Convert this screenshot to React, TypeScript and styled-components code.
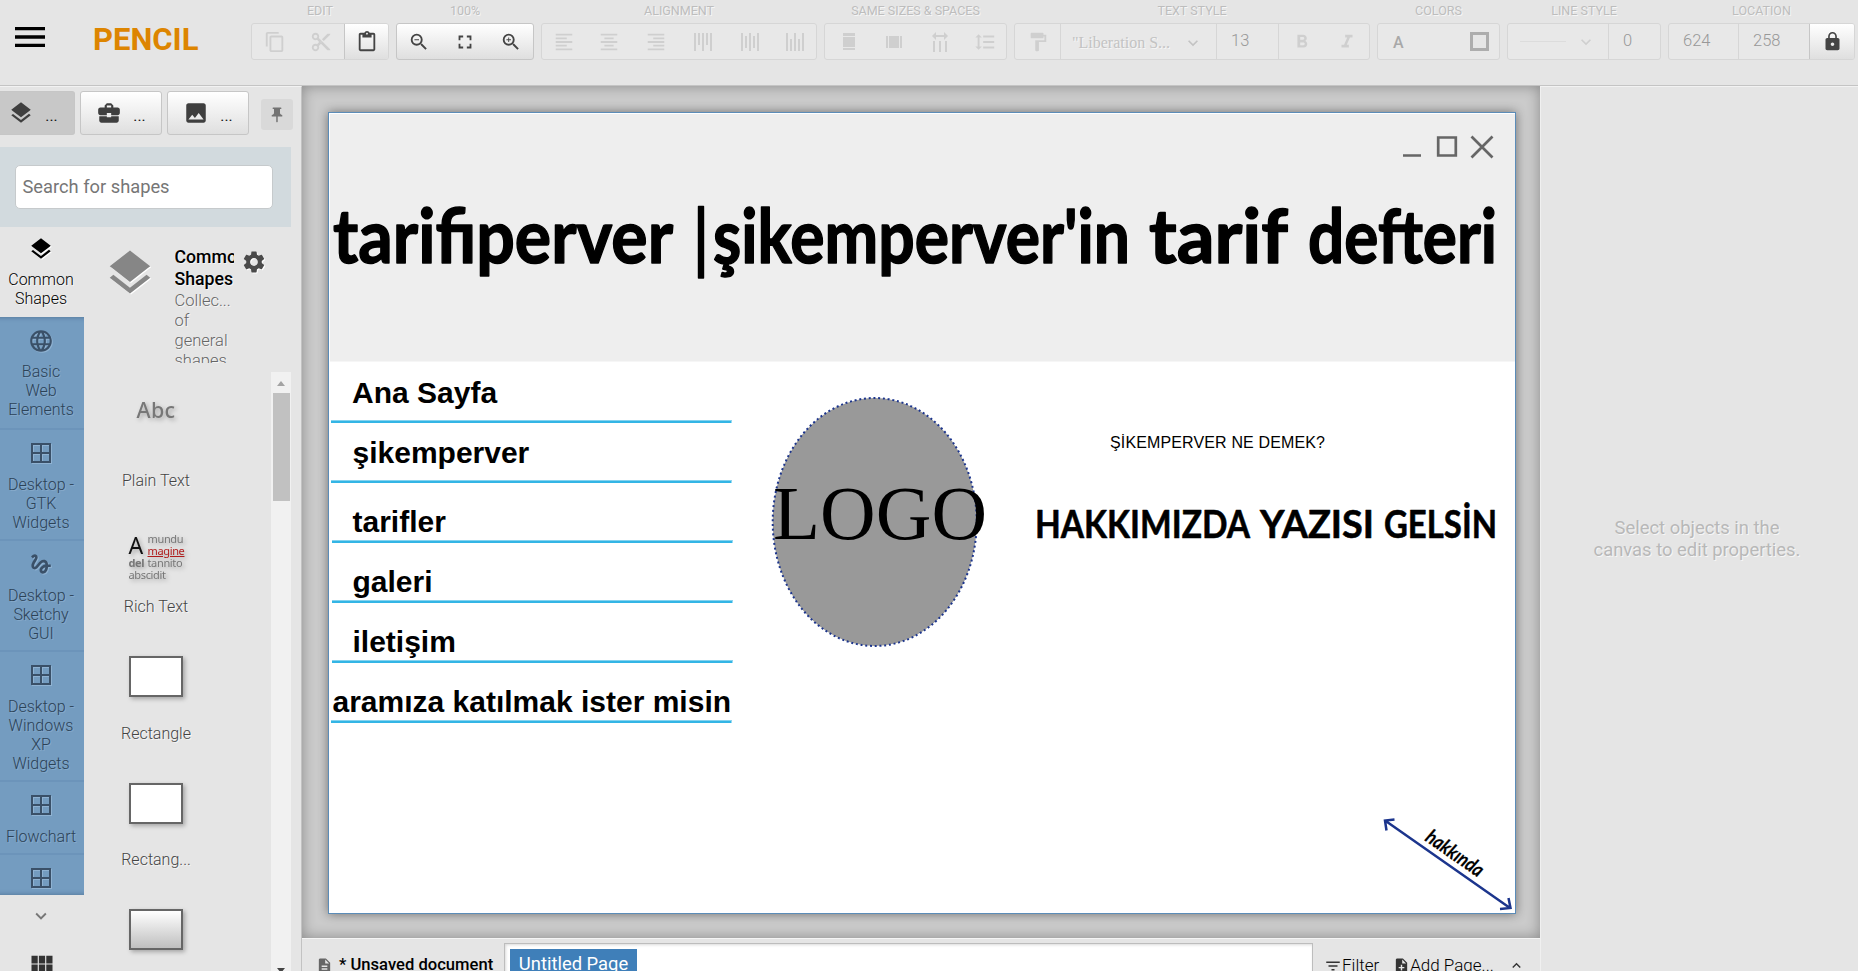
import React from 'react';
import styled, { createGlobalStyle, css } from 'styled-components';
import {
  MdMenu, MdContentCopy, MdContentCut, MdContentPaste, MdZoomOut, MdZoomIn, MdFullscreen,
  MdFormatAlignLeft, MdFormatAlignCenter, MdFormatAlignRight, MdFormatLineSpacing, MdFormatPaint,
  MdFormatBold, MdFormatItalic, MdExpandMore, MdExpandLess, MdLock, MdLayers, MdBusinessCenter, MdPhoto,
  MdPushPin, MdSettings, MdLanguage, MdGesture, MdViewModule, MdDescription, MdFilterList, MdNoteAdd,
} from 'react-icons/md';

const Global = createGlobalStyle`
  * { box-sizing: border-box; }
  html, body { margin: 0; height: 100%; overflow: hidden; }
  body { font-family: Roboto, sans-serif; font-size: 16px; color: #000; background: #e5e5e5; }
`;

const emboss = css`text-shadow: 1px 1px 0 #f6f6f6;`;

const Shell = styled.div`
  width: 1858px; height: 971px; overflow: hidden;
  display: flex; flex-direction: column; background: #e5e5e5;
`;

/* top bar */
const Header = styled.header`
  display: flex; flex: none; height: 86px; border-bottom: 1px solid #c4c4c4;
`;
const MenuButton = styled.div`
  width: 93px; padding: 16.5px 0 0 10px; svg { display: block; }
`;
const Brand = styled.div`
  width: 158px; padding-top: 21.5px; font-size: 31px; line-height: 35px; font-weight: 700; color: #dd8500;
`;
const Groups = styled.div`display: flex; gap: 7px;`;
const Group = styled.section<{ $w: number }>`width: ${p => p.$w}px;`;
const GroupTitle = styled.div`
  height: 23px; padding-top: 3px; font-size: 12.5px; line-height: 16px; text-align: center; color: #bdbdbd;
  white-space: nowrap; ${emboss}
`;
const GroupBox = styled.div<{ $live?: boolean }>`
  height: 37px; display: flex; border: 1px solid ${p => (p.$live ? '#c6c6c6' : '#d6d6d6')}; border-radius: 3px;
  background: ${p => (p.$live ? 'linear-gradient(#fff, #dfdfdf)' : '#e8e8e8')};
  color: ${p => (p.$live ? '#444' : '#cfcfcf')};
  overflow: hidden;
`;
const Cell = styled.div<{ $w?: number; $line?: boolean; $live?: boolean }>`
  ${p => (p.$w ? `flex: none; width: ${p.$w}px;` : 'flex: 1;')}
  display: flex; align-items: center; justify-content: center;
  ${p => p.$line && 'border-left: 1px solid #d6d6d6;'}
  ${p => p.$live && 'background: linear-gradient(#fff, #dfdfdf); color: #444; border-left: 1px solid #c6c6c6;'}
`;
const NumberCell = styled(Cell)`
  justify-content: flex-start; padding: 0 0 2px 14px; font-size: 16.5px; font-weight: 300; color: #989898;
`;
const FontCell = styled(Cell)`
  justify-content: space-between; padding: 2px 13px 0 11px;
  font-family: "Liberation Serif", serif; color: #c3c3c3; ${emboss}
`;
const LinePreview = styled.div`width: 46px; height: 1px; background: #dcdcdc; margin-right: 10px;`;
const ColorA = styled.div`flex: 1; padding: 9px 0 0 15px; font-weight: 500; color: #a8a8a8;`;
const ColorSquare = styled.div`width: 19px; height: 19px; margin: 8px 10px 0 0; border: 3px solid #adadad; background: #e6e6e6;`;

/* body */
const Body = styled.div`flex: 1; min-height: 0; display: flex;`;
const Sidebar = styled.aside`
  width: 302px; flex: none; display: flex; flex-direction: column; border-top: 1px solid #f2f2f2; border-right: 1px solid #c2c2c2;
`;
const Tabs = styled.div`display: flex; height: 60px; padding-top: 4px; flex: none;`;
const Tab = styled.div<{ $on?: boolean; $w: number }>`
  width: ${p => p.$w}px; height: 44px; margin-right: 5px; border: 1px solid #c6c6c6; border-radius: 3px;
  display: flex; align-items: center; justify-content: center; gap: 11px; color: #3f3f3f;
  background: linear-gradient(#fff, #dfdfdf);
  ${p => p.$on && 'background: #c8c8c8; border-left: 0; border-radius: 0 3px 3px 0; padding-right: 8px;'}
`;
const Dots = styled.span`color: #111; line-height: 20px; padding-top: 5px; font-size: 15.5px;`;
const Pin = styled.div`
  width: 32px; height: 31px; margin: 8px 0 0 7px; border-radius: 3px; background: #d9d9d9; color: #737373;
  display: flex; align-items: center; justify-content: center;
`;
const SearchArea = styled.div`flex: none; width: 291px; height: 80px; background: #d2dade; padding: 18px 18px 0 15px;`;
const SearchInput = styled.div`
  height: 44px; border: 1px solid #c6cacc; border-radius: 5px; background: #fff; padding: 0 6.5px;
  font-size: 18.3px; line-height: 41px; color: #767676;
`;
const Library = styled.div`flex: 1; min-height: 0; display: flex;`;
const NavColumn = styled.nav`width: 84px; display: flex; flex-direction: column; align-items: center;`;
const NavList = styled.div`
  position: relative; width: 84px; height: 668px; flex: none; overflow: hidden; background: #749cc0;
`;
const NavItem = styled.div<{ $on?: boolean; $h: number }>`
  height: ${p => p.$h}px; padding: ${p => (p.$on ? 9 : 10.5)}px 2px 0 0; text-align: center; line-height: 19px; font-weight: 300;
  border-bottom: 2px solid #6c94ba; color: #2c4257; ${p => !p.$on && 'text-shadow: 1px 1px 0 #86aacb;'}
  svg { display: block; margin: 0 auto 8.5px; color: #3a5068; filter: drop-shadow(1px 1px 0 #8fb2d2); }
  ${p => p.$on && css`
    background: #e5e5e5; color: #000; border: 0; ${emboss}
    svg { color: #000; filter: drop-shadow(1px 1px 0 #fff); margin-bottom: 8px; }
  `}
`;
const NavShade = styled.div`
  position: absolute; left: -8px; right: -8px; top: 90px; bottom: 0; box-shadow: inset 0 0 5px rgba(40, 70, 100, .5);
`;
const NavMore = styled.div`padding: 10px 2px 0 0; height: 55px; flex: none; color: #777;`;
const NavGrid = styled.div`flex: none; height: 28px; padding-right: 1px; color: #333;`;
const Collection = styled.div`width: 207px; display: flex; flex-direction: column;`;
const CollectionHead = styled.div`display: flex; height: 136px; overflow: hidden; padding-top: 19px; flex: none;`;
const BigIcon = styled.div`width: 90.5px; padding: 0 0 0 19px; color: #868686; svg { display: block; filter: drop-shadow(1px 1px 0 #fff); }`;
const HeadText = styled.div`width: 59.5px; overflow: hidden; font-size: 16.5px; line-height: 20px; font-weight: 300; color: #666; ${emboss}`;
const HeadTitle = styled.div`font-size: 17.7px; line-height: 22px; font-weight: 500; color: #000; padding-bottom: 1px;`;
const Gear = styled.div`padding: 3px 0 0 7px; color: #4a4a4a; svg { filter: drop-shadow(1px 1px 0 #fff); }`;
const ShapeArea = styled.div`display: flex; justify-content: space-between; height: 599px; margin-top: 9px; overflow: hidden;`;
const ShapeList = styled.div`width: 144px;`;
const Shape = styled.div`height: 126.600px; padding-top: 12px;`;
const Thumb = styled.div`height: 79px; display: flex; align-items: center; justify-content: center; filter: drop-shadow(2px 2px 2px rgba(0,0,0,.28));`;
const ShapeName = styled.div`margin-top: 7.5px; line-height: 20px; text-align: center; font-weight: 300; color: #444; ${emboss}`;
const RectThumb = styled.div<{ $shade?: boolean }>`
  width: 54px; height: 41px; border: 2px solid #666;
  background: ${p => (p.$shade ? 'linear-gradient(#fff, #bfbfbf)' : '#fff')};
`;
const AbcThumb = styled.div`font: 500 21.5px "Noto Sans", sans-serif; color: #777; margin-top: -28px; letter-spacing: .4px;`;
const RichThumb = styled.div`
  width: 55px; height: 49px; margin-top: 14px; font: 11px/12.3px "Noto Sans", sans-serif; color: #777; letter-spacing: -.35px;
  display: grid; grid-template-columns: 19px 1fr; grid-template-rows: repeat(4, 12.3px); white-space: nowrap;
`;
const RichCap = styled.div`grid-row: span 2; font-size: 23px; line-height: 24px; color: #111;`;
const RichRed = styled.div`color: #b01c1c; text-decoration: underline;`;
const ScrollBar = styled.div`width: 20px; background: #f1f1f1; display: flex; flex-direction: column; align-items: center;`;
const ArrowUp = styled.div`border: 4.5px solid transparent; border-top: 0; border-bottom: 5px solid #a3a3a3; margin: 9px 0 7px;`;
const ArrowDown = styled.div`border: 4.5px solid transparent; border-bottom: 0; border-top: 5px solid #444; margin-top: auto; margin-bottom: -2px;`;
const ScrollThumb = styled.div`width: 17px; height: 108px; background: #c1c1c1;`;

/* canvas */
const Center = styled.main`flex: 1; display: flex; flex-direction: column;`;
const Canvas = styled.div`
  height: 852px; flex: none; padding: 26px 0 0 26px; background: #cbcbcb;
  box-shadow: inset 0 0 14px rgba(0,0,0,.32);
`;
const Sheet = styled.div`
  width: 1188px; height: 802px; background: #fff; border: 1px solid #5b8cb8; box-shadow: 0 0 10px rgba(0,0,0,.45);
  svg { display: block; }
`;
const StatusBar = styled.footer`
  flex: 1; display: flex; border-top: 1px solid #f5f5f5; overflow: hidden; white-space: nowrap;
`;
const DocName = styled.div`
  width: 202px; padding: 16px 0 0 14px; display: flex; gap: 6px; font-size: 16.6px; line-height: 20px; font-weight: 500; svg { color: #666; flex: none; margin-top: 2px; }
`;
const PageTabs = styled.div`
  width: 809px; height: 40px; margin-top: 4px; border: 1px solid #bdbdbd; background: #fff; padding: 5px; box-shadow: inset 1px 1px 3px rgba(0,0,0,.15);
`;
const PageTab = styled.div`
  width: 127px; height: 30px; background: #3f7fb9; color: #fff; font-size: 18.4px; line-height: 29px; text-align: center;
`;
const StatusAction = styled.div<{ $ml: number }>`
  display: flex; margin-left: ${p => p.$ml}px; padding-top: 16px; font-size: 17px; line-height: 20px; font-weight: 300; color: #000;
  svg { flex: none; margin-top: 2px; color: #333; }
`;
const Properties = styled.aside`
  width: 318px; flex: none; border-left: 1px solid #f0f0f0; border-top: 1px solid #f2f2f2; padding: 430px 5px 0 0;
  text-align: center; font-size: 18.4px; line-height: 22px; color: #b8b8b8; ${emboss}
`;

const Bars = ({ kind }: { kind: 'top' | 'middle' | 'bottom' }) => (
  <svg width="20" height="20" viewBox="0 0 20 20" fill="currentColor">
    {[0, 1, 2, 3, 4].map(i => {
      const h = i % 2 ? 12 : 18;
      const y = kind === 'top' ? 1 : kind === 'middle' ? 10 - h / 2 : 19 - h;
      return <rect key={i} x={1 + i * 4} y={y} width="2" height={h} />;
    })}
  </svg>
);
const SameWidth = () => (
  <svg width="14" height="18" fill="currentColor"><rect x="1" width="12" height="3" /><rect x="1" y="4" width="12" height="10" /><rect x="1" y="15" width="12" height="2" /></svg>
);
const SameHeight = () => (
  <svg width="18" height="14" fill="currentColor"><rect y="1" width="2" height="12" /><rect x="3" y="1" width="10" height="12" /><rect x="14" y="1" width="2" height="12" /></svg>
);
const Spacing = () => (
  <svg width="18" height="20" fill="currentColor"><path d="M0 4l4-4v3h8V0l4 4-4 4V5H4v3z" /><rect x="1" y="9" width="2" height="11" /><rect x="7" y="9" width="2" height="11" /><rect x="13" y="9" width="2" height="11" /></svg>
);
const WindowIcon = () => (
  <svg width="26" height="26" viewBox="0 0 26 26" fill="none" stroke="currentColor" strokeWidth="2">
    <path d="M4 4h18v18H4zM13 4v18M4 13h18" />
  </svg>
);

/* hand-lettered caption whose words are fitted to fixed widths */
type Word = [string, number, number];
const Script = ({ words, y, size, stroke, slant, weight = 700 }: { words: Word[]; y: number; size: number; stroke: number; slant?: boolean; weight?: number }) => (
  <g fontFamily="Lato, sans-serif" fontWeight={weight} fontStyle={slant ? 'italic' : 'normal'} fontSize={size} stroke="#000" strokeWidth={stroke} strokeLinejoin="round">
    {words.map(([t, x0, x1]) => (
      <text key={t + x0} x={x0} y={y} textLength={x1 - x0} lengthAdjust="spacingAndGlyphs">{t}</text>
    ))}
  </g>
);

const menu: [string, number, number, number][] = [
  ['Ana Sayfa', 352, 403, 420], ['şikemperver', 352.5, 463, 480], ['tarifler', 352.5, 532, 540],
  ['galeri', 352.5, 592, 600], ['iletişim', 352.5, 652, 660], ['aramıza katılmak ister misin', 332.5, 712, 720],
];

const Drawing = () => (
  <svg width="1186" height="800" viewBox="329 113 1186 800">
    <rect x="330" y="114" width="1185" height="247.5" fill="#eee" />
    <g fill="none" stroke="#666" strokeWidth="2.7">
      <path d="M1403 155.500h18M1438.200 137.500h17.600v18h-17.600zM1471.500 136.500l21 21M1492.500 136.500l-21 21" />
    </g>
    <Script y={263} size={75} stroke={1.5} words={[['tarifiperver', 333, 673], ["şikemperver'in", 713, 1130], ['tarif', 1149, 1288], ['defteri', 1308, 1497]]} />
    <Script y={265} size={76} stroke={1.5} weight={400} words={[['|', 692, 710]]} />
    {menu.map(([t, x, y, ly], i) => {
      const lx = i > 1 && i < 5 ? 332 : 331;
      return (
        <g key={t}>
          <text x={x} y={y} fontFamily='"Liberation Sans", sans-serif' fontWeight="700" fontSize="30">{t}</text>
          <rect x={lx} y={ly} width="400.5" height="3" fill="#33b5e5" />
          <rect x={lx} y={ly} width="400.5" height="1" fill="#85d3ef" />
        </g>
      );
    })}
    <ellipse cx="874.7" cy="522" rx="102" ry="124" fill="#999" stroke="#1c358d" strokeWidth="2" strokeDasharray="2 2.75" />
    <text x="773" y="538.5" fontFamily='"Liberation Serif", serif' fontSize="77" textLength="214">LOGO</text>
    <text x="1110" y="448" fontFamily='"Liberation Sans", sans-serif' fontSize="16" textLength="215">ŞİKEMPERVER NE DEMEK?</text>
    <Script y={537.5} size={39} stroke={0.6} words={[['HAKKIMIZDA', 1035, 1250], ['YAZISI', 1260, 1374], ['GELSİN', 1384, 1497]]} />
    <path d="M1385 820.500L1510 908M1394.500 819.500l-9.500 1l1.500 10M1508.500 898l2 10l-10.500 1" fill="none" stroke="#1c358d" strokeWidth="2.5" />
    <g transform="translate(1424 840) rotate(35)"><Script slant y={0} size={20} stroke={0.2} words={[['hakkında', 0, 66]]} /></g>
  </svg>
);

const nav: [React.ReactNode, string[], number][] = [
  [<MdLayers size={26} />, ['Common', 'Shapes'], 90],
  [<MdLanguage size={26} />, ['Basic', 'Web', 'Elements'], 112.5],
  [<WindowIcon />, ['Desktop -', 'GTK', 'Widgets'], 111],
  [<MdGesture size={26} />, ['Desktop -', 'Sketchy', 'GUI'], 111],
  [<WindowIcon />, ['Desktop -', 'Windows', 'XP', 'Widgets'], 130],
  [<WindowIcon />, ['Flowchart'], 73],
  [<WindowIcon />, [], 80],
];

export default function App() {
  return (
    <Shell>
      <Global />
      <Header>
        <MenuButton><MdMenu size={40} /></MenuButton>
        <Brand>PENCIL</Brand>
        <Groups>
          <Group $w={138}><GroupTitle>EDIT</GroupTitle>
            <GroupBox><Cell><MdContentCopy size={22} /></Cell><Cell><MdContentCut size={22} /></Cell><Cell $w={44} $live><MdContentPaste size={22} /></Cell></GroupBox></Group>
          <Group $w={138}><GroupTitle>100%</GroupTitle>
            <GroupBox $live><Cell><MdZoomOut size={22} /></Cell><Cell $w={47}><MdFullscreen size={22} /></Cell><Cell><MdZoomIn size={22} /></Cell></GroupBox></Group>
          <Group $w={276}><GroupTitle>ALIGNMENT</GroupTitle>
            <GroupBox>
              <Cell $w={44}><MdFormatAlignLeft size={22} /></Cell><Cell><MdFormatAlignCenter size={22} /></Cell><Cell><MdFormatAlignRight size={22} /></Cell>
              <Cell><Bars kind="top" /></Cell><Cell><Bars kind="middle" /></Cell><Cell $w={43}><Bars kind="bottom" /></Cell>
            </GroupBox></Group>
          <Group $w={183}><GroupTitle>SAME SIZES &amp; SPACES</GroupTitle>
            <GroupBox><Cell $w={47}><SameWidth /></Cell><Cell><SameHeight /></Cell><Cell><Spacing /></Cell><Cell $w={42}><MdFormatLineSpacing size={22} /></Cell></GroupBox></Group>
          <Group $w={356}><GroupTitle>TEXT STYLE</GroupTitle>
            <GroupBox>
              <Cell $w={45}><MdFormatPaint size={22} /></Cell>
              <FontCell $w={156} $line>"Liberation S...<MdExpandMore size={20} /></FontCell>
              <NumberCell $w={62} $line>13</NumberCell>
              <Cell $line><MdFormatBold size={22} /></Cell><Cell $w={45}><MdFormatItalic size={22} /></Cell>
            </GroupBox></Group>
          <Group $w={123}><GroupTitle>COLORS</GroupTitle>
            <GroupBox><ColorA>A</ColorA><ColorSquare /></GroupBox></Group>
          <Group $w={154}><GroupTitle>LINE STYLE</GroupTitle>
            <GroupBox><Cell $w={100}><LinePreview /><MdExpandMore size={20} /></Cell><NumberCell $line>0</NumberCell></GroupBox></Group>
          <Group $w={187}><GroupTitle>LOCATION</GroupTitle>
            <GroupBox><NumberCell $w={69}>624</NumberCell><NumberCell $w={71} $line>258</NumberCell><Cell $live><MdLock size={21} /></Cell></GroupBox></Group>
        </Groups>
      </Header>
      <Body>
        <Sidebar>
          <Tabs>
            <Tab $on $w={75}><MdLayers size={26} /><Dots>...</Dots></Tab>
            <Tab $w={82}><MdBusinessCenter size={26} /><Dots>...</Dots></Tab>
            <Tab $w={82}><MdPhoto size={26} /><Dots>...</Dots></Tab>
            <Pin><MdPushPin size={18} /></Pin>
          </Tabs>
          <SearchArea><SearchInput>Search for shapes</SearchInput></SearchArea>
          <Library>
            <NavColumn>
              <NavList>
                {nav.map(([icon, lines, h], i) => (
                  <NavItem key={i} $on={i === 0} $h={h}>{icon}{lines.map(l => <div key={l}>{l}</div>)}</NavItem>
                ))}
                <NavShade />
              </NavList>
              <NavMore><MdExpandMore size={22} /></NavMore>
              <NavGrid><MdViewModule size={28} /></NavGrid>
            </NavColumn>
            <Collection>
              <CollectionHead>
                <BigIcon><MdLayers size={54} /></BigIcon>
                <HeadText><HeadTitle>Common<br />Shapes</HeadTitle>Collec...<br />of<br />general<br />shapes</HeadText>
                <Gear><MdSettings size={26} /></Gear>
              </CollectionHead>
              <ShapeArea>
                <ShapeList>
                  <Shape><Thumb><AbcThumb>Abc</AbcThumb></Thumb><ShapeName>Plain Text</ShapeName></Shape>
                  <Shape><Thumb><RichThumb><RichCap>A</RichCap><div>mundu</div><RichRed>magine</RichRed><b>del</b><div>tannito</div><div>abscidit</div></RichThumb></Thumb><ShapeName>Rich Text</ShapeName></Shape>
                  <Shape><Thumb><RectThumb /></Thumb><ShapeName>Rectangle</ShapeName></Shape>
                  <Shape><Thumb><RectThumb /></Thumb><ShapeName>Rectang...</ShapeName></Shape>
                  <Shape><Thumb><RectThumb $shade /></Thumb></Shape>
                </ShapeList>
                <ScrollBar><ArrowUp /><ScrollThumb /><ArrowDown /></ScrollBar>
              </ShapeArea>
            </Collection>
          </Library>
        </Sidebar>
        <Center>
          <Canvas><Sheet><Drawing /></Sheet></Canvas>
          <StatusBar>
            <DocName><MdDescription size={17} />* Unsaved document</DocName>
            <PageTabs><PageTab>Untitled Page</PageTab></PageTabs>
            <StatusAction $ml={11}><MdFilterList size={18} />Filter</StatusAction>
            <StatusAction $ml={14}><MdNoteAdd size={17} />Add Page...</StatusAction>
            <StatusAction $ml={14}><MdExpandLess size={17} /></StatusAction>
          </StatusBar>
        </Center>
        <Properties>Select objects in the<br />canvas to edit properties.</Properties>
      </Body>
    </Shell>
  );
}
